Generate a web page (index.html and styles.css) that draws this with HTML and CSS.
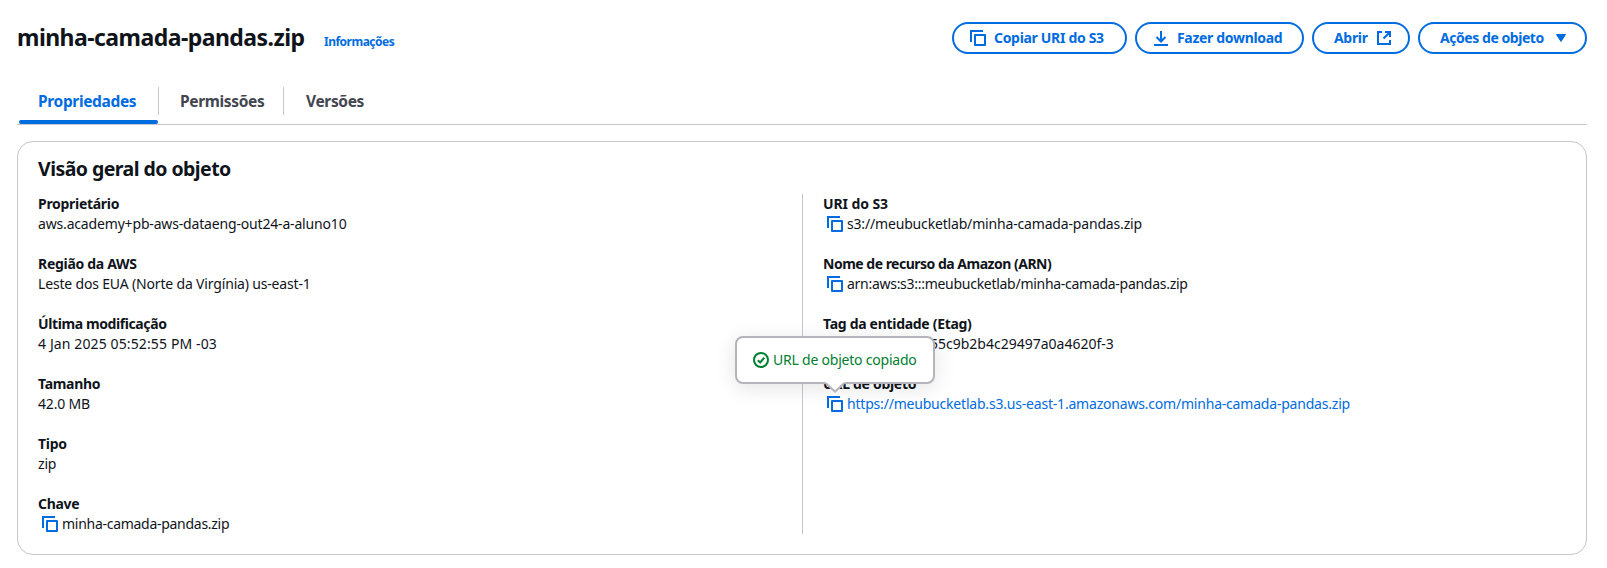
FILE: index.html
```
<!DOCTYPE html>
<html lang="pt-BR">
<head>
<meta charset="utf-8">
<title>minha-camada-pandas.zip</title>
<link rel="stylesheet" href="styles.css">
</head>
<body>
<svg class="defs" aria-hidden="true">
  <symbol id="copy" viewBox="0 0 16 16"><path d="M1 12V1h12"/><rect x="5" y="5" width="10" height="10" stroke-linejoin="round"/></symbol>
</svg>
<main class="page">
  <header class="header">
    <h1 class="title">minha-camada-pandas.zip</h1>
    <a class="info">Informações</a>
    <div class="actions">
      <button class="btn btn-copy"><svg class="icon"><use href="#copy"/></svg><span class="t-copy">Copiar URI do S3</span></button>
      <button class="btn btn-download"><svg class="icon" viewBox="0 0 16 16"><path d="M8 1v11M3.5 7 8 11.5 12.5 7M1 15h14"/></svg><span class="t-download">Fazer download</span></button>
      <button class="btn btn-open"><span class="t-open">Abrir</span><svg class="icon" viewBox="0 0 16 16"><path d="M6 2H2v12h12v-4M9 2h5v5M14 2 7.5 8.5"/></svg></button>
      <button class="btn btn-menu"><span class="t-menu">Ações de objeto</span><svg class="icon" viewBox="0 0 16 16"><path class="solid" d="M3.5 4.5h9L8 11.5z"/></svg></button>
    </div>
  </header>
  <nav class="tabs">
    <a class="tab tab-active">Propriedades</a>
    <a class="tab tab-perm">Permissões</a>
    <a class="tab tab-last">Versões</a>
  </nav>
  <section class="card">
    <h2 class="card-title">Visão geral do objeto</h2>
    <div class="columns">
      <dl class="column">
        <div class="field"><dt>Proprietário</dt><dd>aws.academy+pb-aws-dataeng-out24-a-aluno10</dd></div>
        <div class="field"><dt>Região da AWS</dt><dd>Leste dos EUA (Norte da Virgínia) us-east-1</dd></div>
        <div class="field"><dt class="label-modified">Última modificação</dt><dd class="date">4 Jan 2025 05:52:55 PM -03</dd></div>
        <div class="field"><dt>Tamanho</dt><dd>42.0 MB</dd></div>
        <div class="field"><dt>Tipo</dt><dd>zip</dd></div>
        <div class="field"><dt>Chave</dt><dd class="copyable key"><svg class="icon"><use href="#copy"/></svg>minha-camada-pandas.zip</dd></div>
      </dl>
      <dl class="column column-right">
        <div class="field"><dt class="label-uri">URI do S3</dt><dd class="copyable"><svg class="icon"><use href="#copy"/></svg>s3://meubucketlab/minha-camada-pandas.zip</dd></div>
        <div class="field"><dt class="label-arn">Nome de recurso da Amazon (ARN)</dt><dd class="copyable arn"><svg class="icon"><use href="#copy"/></svg>arn:aws:s3:::meubucketlab/minha-camada-pandas.zip</dd></div>
        <div class="field"><dt>Tag da entidade (Etag)</dt><dd class="copyable"><svg class="icon"><use href="#copy"/></svg><span class="etag">55c9b2b4c29497a0a4620f-3</span></dd></div>
        <div class="field"><dt>URL de objeto</dt><dd class="copyable"><svg class="icon"><use href="#copy"/></svg><a class="link">https://meubucketlab.s3.us-east-1.amazonaws.com/minha-camada-pandas.zip</a>
          <div class="popover" role="status">
            <svg class="icon" viewBox="0 0 16 16"><circle cx="8" cy="8" r="7"/><path d="M4.8 8.2 7.2 10.5 11.3 5.6"/></svg><span>URL de objeto copiado</span>
            <svg class="arrow" viewBox="0 0 20 11"><path class="arrow-fill" d="M0 0h20L10 10z"/><path class="arrow-line" d="M.5 1 10 9.6 19.5 1"/></svg>
          </div></dd></div>
      </dl>
    </div>
  </section>
</main>
</body>
</html>
```
FILE: styles.css
```
* { box-sizing: border-box; }
body {
  margin: 0;
  background: #fff;
  color: #0f141a;
  font: 14px/20px "Noto Sans", "Open Sans", sans-serif;
}
.defs { position: absolute; width: 0; height: 0; }
h1, h2, dl, dd { margin: 0; }
.page { padding: 22px 20px 13px 17px; white-space: nowrap; }
.icon { width: 16px; height: 16px; flex: none; fill: none; stroke: currentColor; stroke-width: 2; }
.icon .solid { fill: currentColor; stroke-linejoin: round; stroke-width: 1; }

.header { display: flex; height: 32px; }
.title { width: 289px; font-size: 23px; line-height: 31px; font-weight: 700; letter-spacing: -.55px; }
.info { margin: 10px 0 0 18px; font-size: 12px; font-weight: 700; letter-spacing: -.5px; color: #006ce0; }
.actions { display: flex; gap: 8px; margin-left: auto; }
.btn {
  display: flex;
  align-items: center;
  height: 32px;
  padding: 0 16px;
  border: 2px solid #006ce0;
  border-radius: 20px;
  background: #fff;
  color: #006ce0;
  font: 700 14px/20px "Noto Sans", "Open Sans", sans-serif;
  letter-spacing: -.32px;
}
.btn-copy { width: 175px; gap: 8px; }
.btn-download { width: 169px; gap: 8px; }
.btn-open { width: 98px; padding: 0 16px 0 20px; justify-content: space-between; }
.btn-menu { width: 169px; padding: 0 16px 0 20px; justify-content: space-between; letter-spacing: -.45px; }

.tabs { display: flex; height: 44px; margin-top: 27px; border-bottom: 1px solid #c6c6cd; padding-top: 6px; font-size: 15.5px; font-weight: 700; letter-spacing: -.35px; color: #424650; }
.tab { position: relative; height: 28px; line-height: 28px; padding-left: 21px; border-right: 1px solid #c6c6cd; }
.tab-active { width: 142px; color: #006ce0; }
.tab-active::after { content: ""; position: absolute; left: 2px; right: 0; bottom: -9px; height: 4px; border-radius: 2px; background: #006ce0; }
.tab-perm { width: 125px; }
.tab-last { border: 0; padding-left: 22px; }

.card { height: 414px; margin-top: 16px; border: 1px solid #c6c6cd; border-radius: 16px; padding: 15px 20px 0; }
.card-title { font-size: 19.5px; line-height: 24px; font-weight: 700; letter-spacing: -.55px; }
.columns { display: grid; grid-template-columns: 764px 1fr; margin-top: 13px; height: 340px; }
.column { display: flex; flex-direction: column; gap: 20px; }
.column-right { border-left: 1px solid #c6c6cd; padding-left: 20px; }
dt { font-weight: 700; letter-spacing: -.3px; }
dd { letter-spacing: -.17px; }
.label-modified { letter-spacing: -.4px; }
.label-uri { letter-spacing: -.1px; }
.label-arn { letter-spacing: -.5px; }
.date { letter-spacing: .12px; }
.key, .arn { letter-spacing: -.28px; }
.copyable { position: relative; display: flex; align-items: center; gap: 4px; padding-left: 4px; }
.copyable > .icon { color: #006ce0; }
.link { color: #006ce0; letter-spacing: -.2px; }
.etag { margin-left: 83px; letter-spacing: 0; }

.popover {
  position: absolute;
  left: -88px;
  top: -58px;
  width: 200px;
  height: 48px;
  display: flex;
  align-items: center;
  gap: 4px;
  padding-left: 16px;
  border: 2px solid #b4b4bb;
  border-radius: 8px;
  background: #fff;
  color: #00802f;
  letter-spacing: -.22px;
  box-shadow: 0 4px 20px 1px rgba(0, 7, 22, .1);
}
.arrow { position: absolute; left: 88px; top: 44px; width: 20px; height: 11px; overflow: visible; }
.arrow-fill { fill: #fff; }
.arrow-line { fill: none; stroke: #b4b4bb; stroke-width: 2; }
```
